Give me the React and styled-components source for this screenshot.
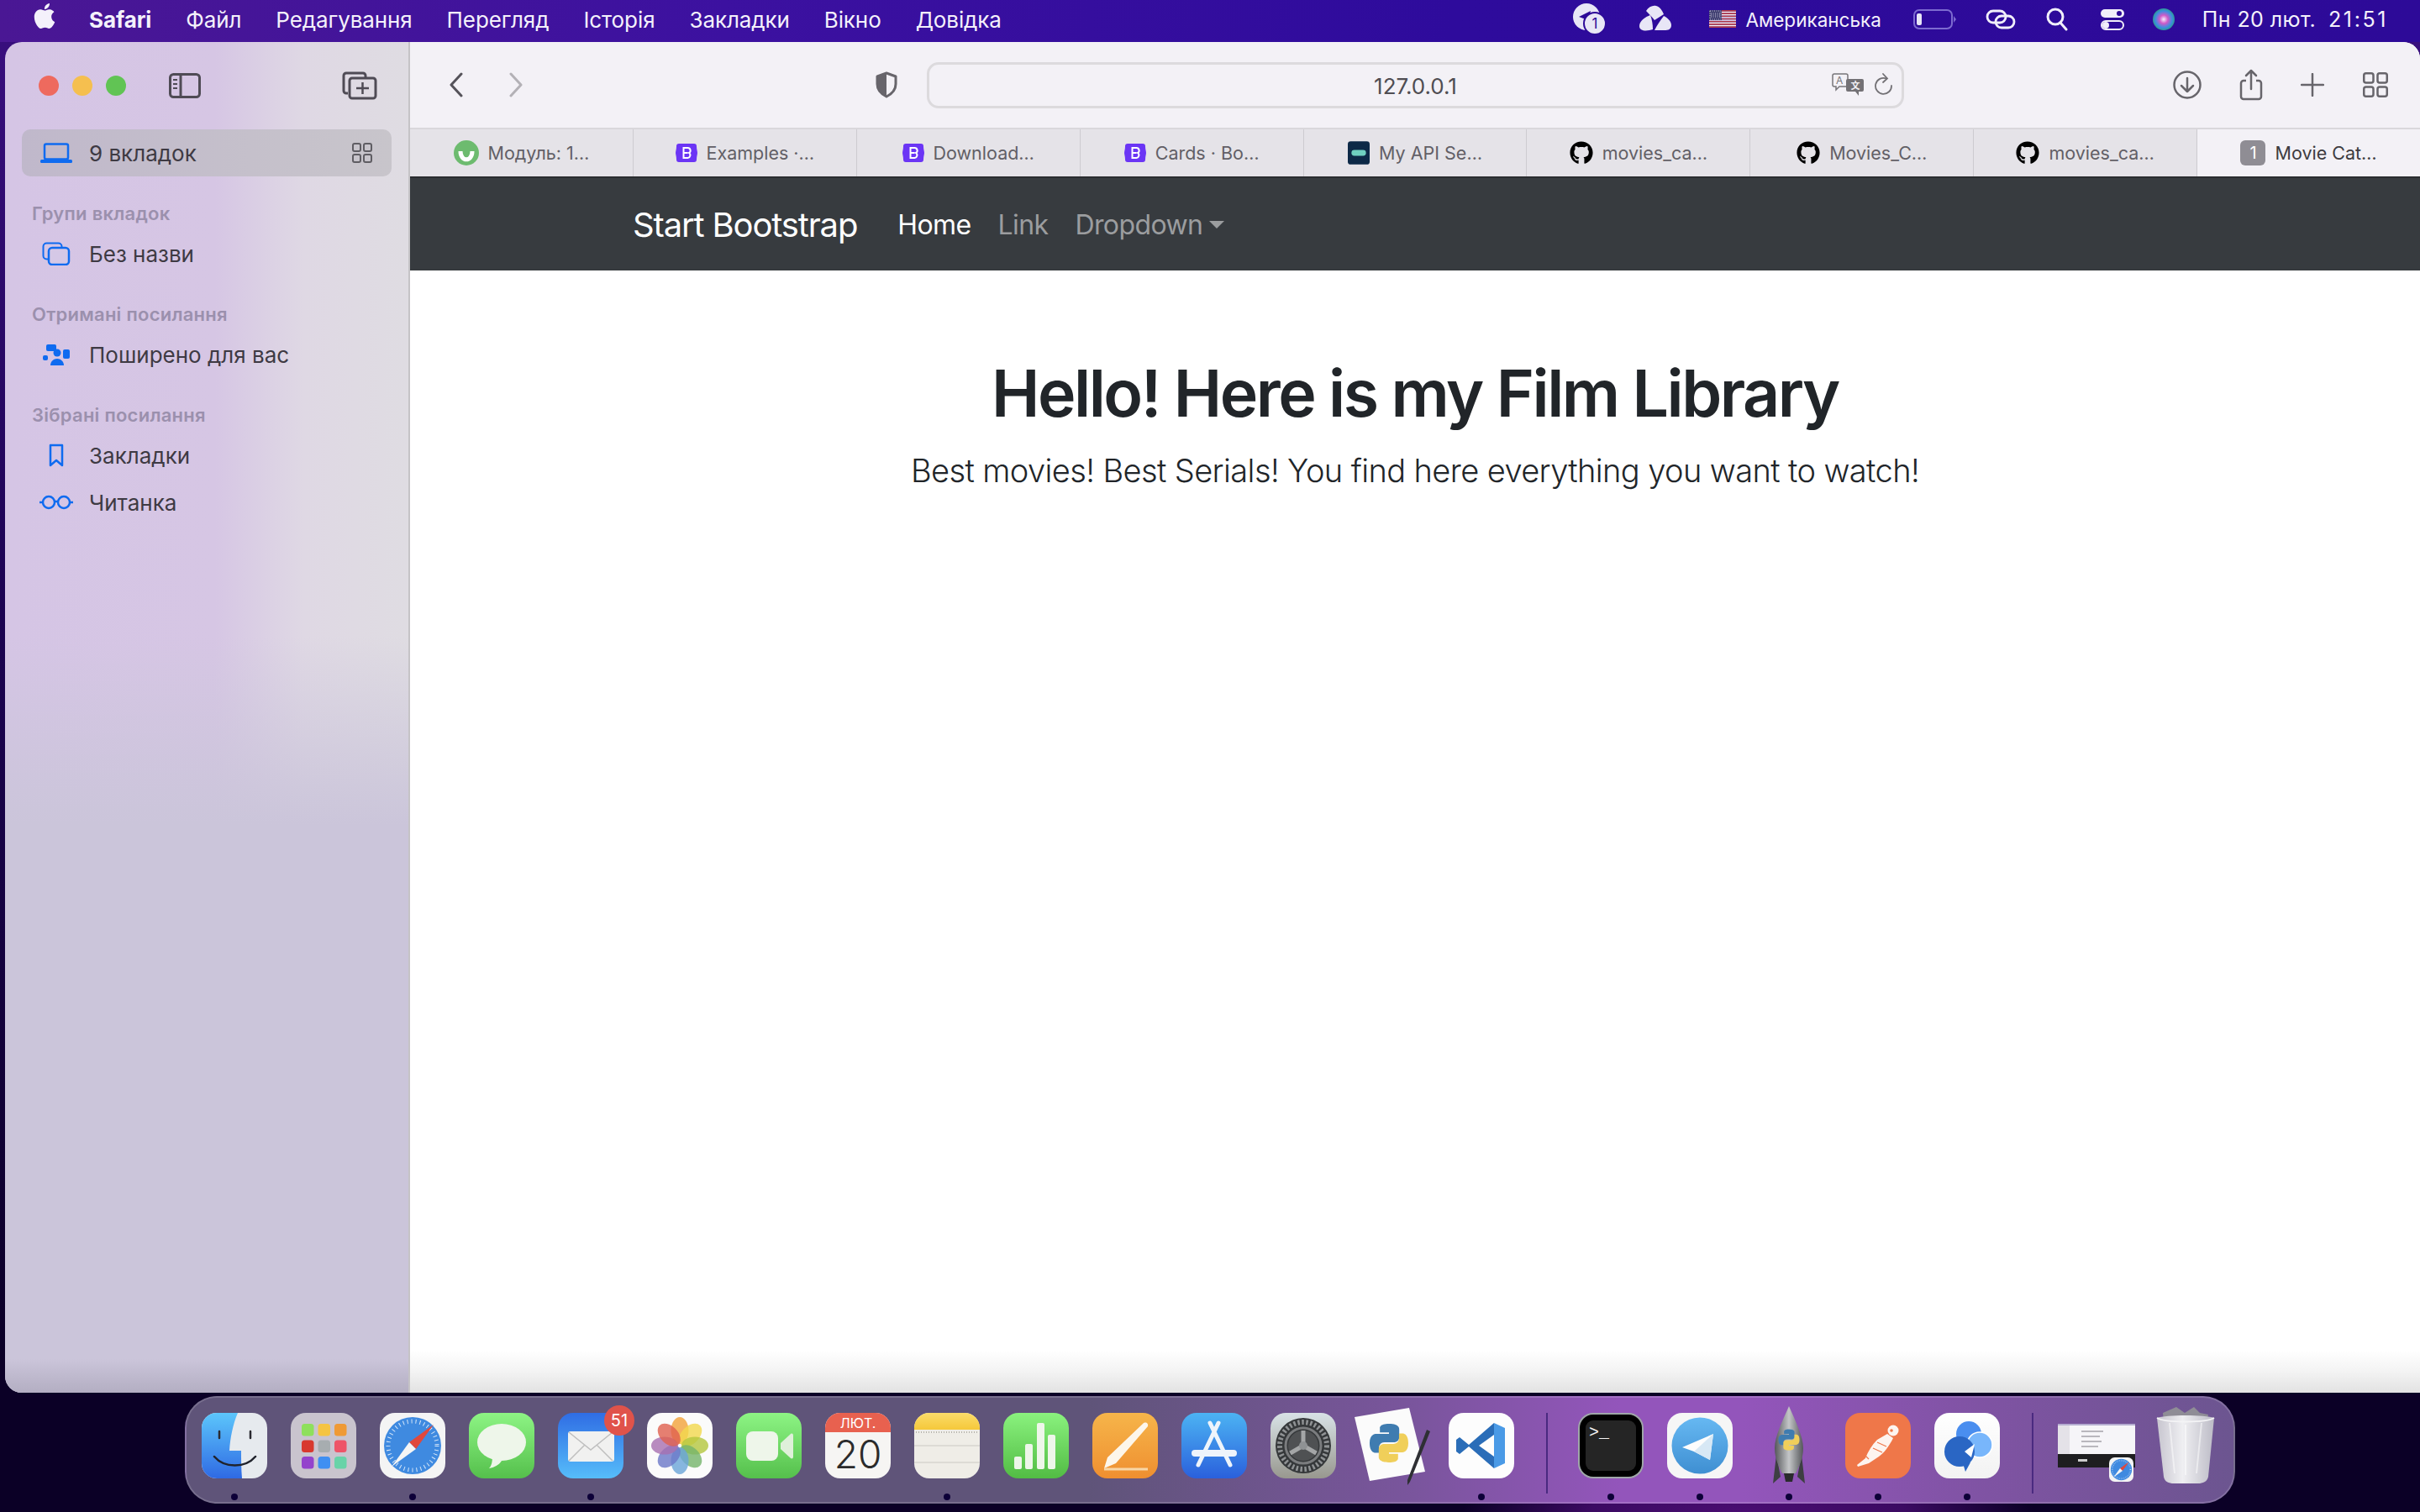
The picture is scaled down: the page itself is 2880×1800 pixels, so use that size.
import React from "react";
import styled, { createGlobalStyle } from "styled-components";
import { SiApple } from "react-icons/si";
import { FaGithub } from "react-icons/fa";

const GlobalStyle = createGlobalStyle`
  html, body { margin: 0; padding: 0; }
  body { font-family: Inter, "Noto Sans", sans-serif; }
  * { box-sizing: border-box; }
`;

const Page = styled.div`
  width: 2880px;
  height: 1800px;
  overflow: hidden;
  display: flex;
  flex-direction: column;
  background:
    radial-gradient(ellipse 340px 70px at 2080px 1800px, #4a0d72 0%, #3b0a62 55%, transparent 100%),
    linear-gradient(180deg, #3a0f80 0%, #1c0352 40%, #0b0026 90%);
`;

/* ---------- menu bar ---------- */
const MenuBar = styled.div`
  height: 50px;
  flex: none;
  display: flex;
  align-items: center;
  padding: 0 0 4px 38px;
  color: #f4f1fb;
  font-size: 26px;
  letter-spacing: -0.1px;
  background: linear-gradient(90deg, #4a1794 0%, #3c11a0 30%, #2e0b9c 60%, #2d0a98 100%);
`;
const AppleMark = styled.span`
  width: 30px;
  height: 34px;
  display: flex;
  margin-right: 38px;
  margin-top: -4px;
  font-size: 30px;
`;
const MenuItem = styled.span`
  margin-right: ${(p) => p.$gap || 41}px;
  font-weight: ${(p) => (p.$bold ? 700 : 400)};
  white-space: nowrap;
`;
const StatusArea = styled.div`
  margin-left: auto;
  display: flex;
  align-items: center;
  padding-right: 38px;
`;
const StatusSlot = styled.span`
  display: flex;
  align-items: center;
  margin-left: ${(p) => p.$left || 0}px;
  white-space: nowrap;
`;
const KeyboardName = styled(StatusSlot)`
  font-size: 22.5px;
  letter-spacing: 0;
`;
const DateText = styled(StatusSlot)`
  font-size: 25px;
  letter-spacing: 0.4px;
`;
const TimeText = styled(StatusSlot)`
  font-size: 25px;
  letter-spacing: 2.6px;
`;

/* ---------- safari window ---------- */
const Window = styled.div`
  height: 1608px;
  flex: none;
  margin-left: 6px;
  display: flex;
  overflow: hidden;
  border-radius: 20px 20px 0 20px;
`;
const Sidebar = styled.div`
  width: 482px;
  flex: none;
  border-right: 2px solid #c5c3c6;
  background:
    linear-gradient(180deg, transparent 97.500%, rgba(150, 146, 165, 0.45) 100%),
    linear-gradient(180deg, rgba(205, 197, 222, 0) 0%, rgba(205, 197, 222, 0) 44%, rgba(203, 197, 218, 1) 58%),
    linear-gradient(90deg, #d5c5e5 0%, #d6c6e4 52%, #dfd8e4 74%, #dfdce2 100%);
`;
const SidebarTop = styled.div`
  height: 104px;
  display: flex;
  align-items: center;
  padding-left: 40px;
`;
const Light = styled.span`
  width: 24px;
  height: 24px;
  border-radius: 50%;
  margin-right: 16px;
  background: ${(p) => p.$color};
`;
const TopIcon = styled.span`
  display: flex;
  margin-left: ${(p) => p.$left}px;
`;
const SideRow = styled.div`
  height: 56px;
  margin: 0 20px;
  padding: 0 23px 0 16px;
  display: flex;
  align-items: center;
  border-radius: 10px;
  font-size: 26px;
  color: #3e3a43;
  background: ${(p) => (p.$active ? "linear-gradient(90deg,#c0b8cb,#c8c5cb)" : "transparent")};
`;
const SideIcon = styled.span`
  width: 50px;
  margin-right: 14px;
  display: flex;
  justify-content: center;
  align-items: center;
`;
const RowEnd = styled.span`
  margin-left: auto;
  display: flex;
`;
const SideSection = styled.div`
  margin-top: 29px;
`;
const SideTitle = styled.div`
  height: 30px;
  line-height: 30px;
  margin-bottom: 5px;
  padding-left: 32px;
  font-size: 22px;
  font-weight: 600;
  letter-spacing: 0.25px;
  color: #9b90ad;
`;
const Main = styled.div`
  flex: 1;
  min-width: 0;
  display: flex;
  flex-direction: column;
  background: #fff;
`;
const Toolbar = styled.div`
  height: 104px;
  flex: none;
  padding-left: 35px;
  display: flex;
  align-items: center;
  background: #f3f1f6;
  border-bottom: 2px solid #d9d7db;
`;
const ToolBtn = styled.span`
  width: 40px;
  height: 40px;
  flex: none;
  display: flex;
  align-items: center;
  justify-content: center;
  margin-left: ${(p) => p.$left || 0}px;
`;
const UrlBar = styled.div`
  width: 1163px;
  height: 55px;
  flex: none;
  margin-left: 28px;
  display: grid;
  grid-template-columns: 1fr auto 1fr;
  align-items: center;
  border: 3px solid #dcdadd;
  border-radius: 14px;
  color: #4f4d52;
  font-size: 26px;
`;
const UrlText = styled.span`
  grid-column: 2;
  padding-top: 2px;
`;
const UrlTools = styled.div`
  grid-column: 3;
  display: flex;
  justify-content: flex-end;
  align-items: center;
  gap: 13px;
  padding-right: 10px;
`;
const TabStrip = styled.div`
  height: 56px;
  flex: none;
  display: flex;
  background: #e5e3e8;
`;
const Tab = styled.div`
  flex: 1;
  min-width: 0;
  display: flex;
  align-items: center;
  justify-content: center;
  gap: 11px;
  font-size: 21.500px;
  white-space: nowrap;
  color: ${(p) => (p.$active ? "#3d3b40" : "#625f66")};
  background: ${(p) => (p.$active ? "#f3f1f6" : "transparent")};
  border-right: ${(p) => (p.$active ? "none" : "1px solid #cdcbd0")};
`;
const NavBar = styled.nav`
  height: 112px;
  flex: none;
  padding-left: 265px;
  display: flex;
  align-items: center;
  background: #373b3f;
  border-top: 2px solid #2a2c2f;
`;
const Brand = styled.span`
  font-size: 40px;
  color: #fff;
  margin-right: 48px;
  letter-spacing: -1.15px;
`;
const NavLink = styled.span`
  font-size: 32px;
  letter-spacing: -0.6px;
  color: ${(p) => (p.$active ? "#fff" : "#9b9d9f")};
  margin-right: 32px;
  display: flex;
  align-items: center;
`;
const Caret = styled.span`
  width: 0;
  height: 0;
  margin-left: 8px;
  border-top: 9px solid currentColor;
  border-left: 9px solid transparent;
  border-right: 9px solid transparent;
`;
const Hero = styled.div`
  flex: 1;
  padding-top: 96px;
  text-align: center;
  color: #212529;
`;
const HeroTitle = styled.h1`
  margin: 0;
  font-size: 77px;
  font-weight: 600;
  line-height: 100px;
  letter-spacing: -2.5px;
`;
const HeroLead = styled.p`
  margin: 17px 0 0;
  font-size: 38px;
  font-weight: 300;
  line-height: 50px;
  letter-spacing: -0.6px;
`;
const BottomShade = styled.div`
  height: 50px;
  flex: none;
  background: linear-gradient(180deg, #fff 0%, #f3f3f3 50%, #e2e2e2 100%);
`;

/* ---------- dock ---------- */
const DockRow = styled.div`
  margin-top: 4px;
  display: flex;
  justify-content: center;
`;
const Dock = styled.div`
  width: 2440px;
  height: 128px;
  padding: 18px 0 0 4px;
  display: flex;
  border: 2px solid rgba(255, 255, 255, 0.16);
  border-radius: 38px;
  background: linear-gradient(90deg, #5f5479 0%, #5f5479 44%, #7a559d 60%, #9355bb 70%, #9355bb 76%, #7f53a3 88%, #6c5590 100%);
`;
const Slot = styled.div`
  width: 106px;
  flex: none;
  position: relative;
  display: flex;
  flex-direction: column;
  align-items: center;
`;
const Dot = styled.span`
  width: 8px;
  height: 8px;
  margin-top: 18px;
  border-radius: 50%;
  background: ${(p) => (p.$on ? "#0d0038" : "transparent")};
`;
const Badge = styled.span`
  position: absolute;
  top: -9px;
  left: 69px;
  width: 36px;
  height: 36px;
  border-radius: 50%;
  display: flex;
  align-items: center;
  justify-content: center;
  background: #e0534a;
  color: #fff;
  font-size: 20px;
`;
const DockDivider = styled.span`
  width: 2px;
  height: 96px;
  flex: none;
  margin: 0 22px 0 24px;
  background: #4a2a80;
`;
const TileSvg = styled.svg`
  display: block;
  overflow: visible;
`;

/* ---------- small icons ---------- */
const Blue = "#0f6bf0";
const Grey = "#5f5d63";

const Shape = ({ w, h, vb, children }) => (
  <svg width={w} height={h} viewBox={vb || `0 0 ${w} ${h}`} fill="none">
    {children}
  </svg>
);

const GridIcon = ({ c = Grey, s = 24 }) => (
  <Shape w={s} h={s} vb="0 0 24 24">
    {[[1, 1], [14, 1], [1, 14], [14, 14]].map(([x, y]) => (
      <rect key={`${x}-${y}`} x={x} y={y} width="9" height="9" rx="2" stroke={c} strokeWidth="2" />
    ))}
  </Shape>
);

const SidebarToggle = () => (
  <Shape w={38} h={30}>
    <rect x="1.500" y="1.500" width="35" height="27" rx="4" stroke="#4f4b55" strokeWidth="3" />
    <path d="M14 2v26" stroke="#4f4b55" strokeWidth="3" />
    <path d="M5 8h5M5 13h5M5 18h5" stroke="#4f4b55" strokeWidth="2" />
  </Shape>
);

const NewTabGroup = () => (
  <Shape w={42} h={34}>
    <path d="M7 26H5a3 3 0 0 1-3-3V5a3 3 0 0 1 3-3h20a3 3 0 0 1 3 3v2" stroke="#4f4b55" strokeWidth="3" />
    <rect x="9" y="8" width="31" height="24" rx="3" stroke="#4f4b55" strokeWidth="3" />
    <path d="M24.500 13v14M17 20h15" stroke="#4f4b55" strokeWidth="2.500" />
  </Shape>
);

const Laptop = () => (
  <Shape w={38} h={24}>
    <rect x="5" y="1.500" width="28" height="18" rx="2" stroke={Blue} strokeWidth="2.500" />
    <rect x="0" y="20" width="38" height="4" rx="1.500" fill={Blue} />
  </Shape>
);

const TabGroupIcon = () => (
  <Shape w={34} h={28}>
    <rect x="1.500" y="1.500" width="22" height="19" rx="4" stroke={Blue} strokeWidth="2" />
    <rect x="8" y="7" width="24" height="20" rx="4" fill="#d5c8e6" stroke={Blue} strokeWidth="2.500" />
  </Shape>
);

const SharedIcon = () => (
  <Shape w={32} h={25}>
    <rect x="4" y="0" width="12" height="8" rx="2" fill={Blue} />
    <rect x="24" y="6" width="8" height="11" rx="2" fill={Blue} />
    <rect x="0" y="13" width="6" height="6" rx="2" fill={Blue} />
    <circle cx="17" cy="10" r="4.500" fill={Blue} />
    <path d="M9 25c0-5 4-8 8-8s8 3 8 8z" fill={Blue} />
  </Shape>
);

const Bookmark = () => (
  <Shape w={18} h={28}>
    <path d="M2 2h14v24l-7-6-7 6z" stroke={Blue} strokeWidth="2.500" strokeLinejoin="round" />
  </Shape>
);

const Glasses = () => (
  <Shape w={40} h={18}>
    <circle cx="11" cy="9" r="7" stroke={Blue} strokeWidth="2.500" />
    <circle cx="29" cy="9" r="7" stroke={Blue} strokeWidth="2.500" />
    <path d="M18 8h4M0 9h4M36 9h4" stroke={Blue} strokeWidth="2.500" />
  </Shape>
);

const Chevron = ({ left, color }) => (
  <Shape w={18} h={30}>
    <path d={left ? "M15 2 3 15l12 13" : "M3 2l12 13L3 28"} stroke={color} strokeWidth="3" strokeLinecap="round" strokeLinejoin="round" />
  </Shape>
);

const ShieldIcon = () => (
  <Shape w={28} h={32}>
    <path d="M14 2 3 6v9c0 8 5 12 11 15 6-3 11-7 11-15V6z" stroke="#67656b" strokeWidth="3" strokeLinejoin="round" />
    <path d="M14 2 3 6v9c0 8 5 12 11 15z" fill="#67656b" />
  </Shape>
);

const TranslateIcon = () => (
  <Shape w={38} h={28}>
    <path d="M3 1h14a2 2 0 0 1 2 2v11a2 2 0 0 1-2 2H9l-4 4v-4H3a2 2 0 0 1-2-2V3a2 2 0 0 1 2-2z" stroke="#777579" strokeWidth="1.500" />
    <text x="5" y="13" fontSize="12" fontFamily="Inter" fill="#777579">A</text>
    <path d="M19 7h17a2 2 0 0 1 2 2v11a2 2 0 0 1-2 2h-4v5l-4-5h-9a2 2 0 0 1-2-2V9a2 2 0 0 1 2-2z" fill="#737175" />
    <text x="22.500" y="19" fontSize="11" fontFamily="'Noto Sans CJK SC'" fontWeight="700" fill="#f3f1f6">文</text>
  </Shape>
);

const ReloadIcon = () => (
  <Shape w={22} h={28}>
    <path d="M14 6.500A9.500 9.500 0 1 0 20 15" stroke="#737175" strokeWidth="1.800" strokeLinecap="round" />
    <path d="M10 1l5 5.500-5 4.500" stroke="#737175" strokeWidth="1.800" strokeLinecap="round" />
  </Shape>
);

const DownloadIcon = () => (
  <Shape w={34} h={34}>
    <circle cx="17" cy="17" r="15.500" stroke="#67656b" strokeWidth="2.500" />
    <path d="M17 9v16M10 18l7 7 7-7" stroke="#67656b" strokeWidth="2.500" strokeLinecap="round" strokeLinejoin="round" />
  </Shape>
);

const ShareIcon = () => (
  <Shape w={28} h={38}>
    <path d="M8 14H5a3 3 0 0 0-3 3v16a3 3 0 0 0 3 3h18a3 3 0 0 0 3-3V17a3 3 0 0 0-3-3h-3" stroke="#67656b" strokeWidth="2.500" />
    <path d="M14 24V2M8 8l6-6 6 6" stroke="#67656b" strokeWidth="2.500" strokeLinecap="round" strokeLinejoin="round" />
  </Shape>
);

const PlusIcon = () => (
  <Shape w={28} h={28}>
    <path d="M14 1v26M1 14h26" stroke="#67656b" strokeWidth="2.500" strokeLinecap="round" />
  </Shape>
);

/* favicons */
const FavMoodle = () => (
  <Shape w={30} h={30}>
    <circle cx="15" cy="15" r="15" fill="#6dbb6f" />
    <path d="M8 13c0 13 14 13 14 0" stroke="#fff" strokeWidth="5" />
  </Shape>
);
const FavBootstrap = () => (
  <Shape w={26} h={26}>
    <path d="M4 2a3 3 0 0 0-3 3c0 4-1 6-1 8s1 4 1 8a3 3 0 0 0 3 3h18a3 3 0 0 0 3-3c0-4 1-6 1-8s-1-4-1-8a3 3 0 0 0-3-3z" fill="#6b35f5" />
    <path d="M9.500 7h5a3.200 3.200 0 0 1 1.500 6 3.300 3.300 0 0 1-1.500 6h-5zM9.500 13h5" stroke="#fff" strokeWidth="2" fill="none" />
  </Shape>
);
const FavApi = () => (
  <Shape w={26} h={32} vb="0 0 30 32">
    <rect width="30" height="32" rx="4" fill="#0d2947" />
    <rect x="5" y="12" width="20" height="8" rx="4" fill="#6fd0c0" />
  </Shape>
);
const FavNumber = styled.span`
  width: 30px;
  height: 30px;
  border-radius: 6px;
  display: flex;
  align-items: center;
  justify-content: center;
  background: #8f8d94;
  color: #fff;
  font-size: 20px;
`;

/* menu bar extras */
const Extra1 = () => (
  <Shape w={42} h={38}>
    <circle cx="17" cy="16" r="16" fill="#e8e6f6" />
    <path d="M8 16l14-7-3 11z" fill="#2d0a98" />
    <circle cx="27" cy="24" r="13" fill="#e8e6f6" stroke="#2d0a98" strokeWidth="2" />
    <text x="27" y="30" textAnchor="middle" fontSize="17" fontFamily="Inter" fill="#2d0a98">1</text>
  </Shape>
);
const Extra2 = () => (
  <Shape w={38} h={34}>
    <path d="M8 7C11 2 16 0 20 1c4 1 7 5 9 10l-11 7C15 14 11 10 8 7z" fill="#e8e6f6" />
    <path d="M0 25c0-6 7-11 13-13 2 5 3 11 3 17-6 2-16 3-16-4z" fill="#e8e6f6" />
    <path d="M29 13c4 2 9 6 9 11s-4 6-8 6H18c3-6 7-12 11-17z" fill="#e8e6f6" />
  </Shape>
);
const Flag = () => (
  <Shape w={32} h={22}>
    {[0, 1, 2, 3, 4, 5, 6].map((i) => (
      <rect key={i} x="0" y={i * 3.2} width="32" height="1.800" fill="#b23a48" />
    ))}
    {[0, 1, 2, 3, 4, 5].map((i) => (
      <rect key={i} x="0" y={1.8 + i * 3.2} width="32" height="1.400" fill="#f4f1f4" />
    ))}
    <rect width="15" height="12" fill="#3c3b6e" />
    <rect x="1" y="1" width="13" height="10" fill="none" stroke="#cfcde0" strokeWidth="1" strokeDasharray="1 1.500" />
    <path d="M2 4h11M2 6h11M2 8h11" stroke="#cfcde0" strokeDasharray="1 1.500" />
  </Shape>
);
const Battery = () => (
  <Shape w={51} h={24}>
    <rect x="1" y="1" width="45" height="22" rx="6" stroke="#7d6bd0" strokeWidth="2" />
    <rect x="4" y="5" width="6" height="14" rx="2" fill="#e8e6f6" />
    <path d="M48 8l3 4-3 4z" fill="#7d6bd0" />
  </Shape>
);
const LinkExtra = () => (
  <Shape w={36} h={24}>
    <rect x="2" y="2" width="22" height="14" rx="7" stroke="#f1effa" strokeWidth="2.800" />
    <rect x="12" y="8" width="22" height="14" rx="7" stroke="#f1effa" strokeWidth="2.800" />
  </Shape>
);
const SearchExtra = () => (
  <Shape w={26} h={28}>
    <circle cx="11" cy="11" r="9" stroke="#f1effa" strokeWidth="3" />
    <path d="M17 18l7 8" stroke="#f1effa" strokeWidth="3" strokeLinecap="round" />
  </Shape>
);
const ControlExtra = () => (
  <Shape w={30} h={26}>
    <rect x="1" y="1" width="28" height="10" rx="5" fill="#f1effa" />
    <circle cx="23" cy="6" r="3" fill="#2d0a98" />
    <rect x="2" y="15" width="26" height="10" rx="5" stroke="#f1effa" strokeWidth="2" />
    <circle cx="7" cy="20" r="4" fill="#f1effa" />
  </Shape>
);
const SiriExtra = () => (
  <Shape w={28} h={28}>
    <defs>
      <radialGradient id="siri" cx="50%" cy="50%" r="55%">
        <stop offset="0%" stopColor="#f4f0ff" />
        <stop offset="35%" stopColor="#d05ac8" />
        <stop offset="70%" stopColor="#3a8fe0" />
        <stop offset="100%" stopColor="#2aa070" />
      </radialGradient>
    </defs>
    <circle cx="14" cy="14" r="13" fill="url(#siri)" />
  </Shape>
);

/* ---------- dock tiles ---------- */
const R = 18;
const Tile = ({ children, defs }) => (
  <TileSvg width="78" height="78" viewBox="0 0 78 78" fill="none">
    {defs && <defs>{defs}</defs>}
    {children}
  </TileSvg>
);
const VGrad = ({ id, a, b }) => (
  <linearGradient id={id} x1="0" y1="0" x2="0" y2="1">
    <stop offset="0%" stopColor={a} />
    <stop offset="100%" stopColor={b} />
  </linearGradient>
);
const PythonMark = ({ x, y, s }) => (
  <g transform={`translate(${x} ${y}) scale(${s})`}>
    <path d="M12 2c-5 0-4.700 2.200-4.700 2.200V6.500H12v.7H5.500S2 6.800 2 12s3 5 3 5h1.800v-2.400s-.1-3 3-3h4.600s2.900.05 2.900-2.800V4.900S17.800 2 12 2z" fill="#3f7cb0" />
    <path d="M12 2c-5 0-4.700 2.200-4.700 2.200V6.500H12v.7H5.500S2 6.800 2 12s3 5 3 5h1.800v-2.400s-.1-3 3-3h4.600s2.900.05 2.900-2.800V4.900S17.800 2 12 2z" fill="#f0cf5a" transform="rotate(180 12 12)" />
  </g>
);

const Finder = () => (
  <Tile defs={<VGrad id="fb" a="#5cc6fb" b="#2f6ae4" />}>
    <rect width="78" height="78" rx={R} fill="#e6eaee" />
    <path d="M18 0h25c-6 14-9 30-10 45h14c0 10 0 22 1 33H18A18 18 0 0 1 0 60V18A18 18 0 0 1 18 0z" fill="url(#fb)" />
    <path d="M21 22v8M58 22v8" stroke="#2a2a30" strokeWidth="2.500" strokeLinecap="round" />
    <path d="M15 52c12 14 37 14 49 0" stroke="#20232c" strokeWidth="2.500" strokeLinecap="round" />
  </Tile>
);
const Launchpad = () => {
  const colors = ["#8ee05c", "#f5c442", "#ef9a36", "#d8382e", "#a7adb0", "#ee5468", "#9443cc", "#3f8ff2", "#68d3a8"];
  return (
    <Tile>
      <rect width="78" height="78" rx={R} fill="#c9c4ce" />
      {colors.map((c, i) => (
        <rect key={c} x={13 + (i % 3) * 19.5} y={13 + Math.floor(i / 3) * 19.5} width="14.500" height="14.500" rx="3.500" fill={c} />
      ))}
    </Tile>
  );
};
const Safari = ({ s = 78 }) => (
  <TileSvg width={s} height={s} viewBox="0 0 78 78" fill="none">
    <rect width="78" height="78" rx={R} fill="#f4f4f4" />
    <circle cx="39" cy="39" r="34" fill="#3f8ae0" />
    <circle cx="39" cy="39" r="29" stroke="#d5e6f8" strokeWidth="5" strokeDasharray="1 4" />
    <path d="M64 14 35 35l8 8z" fill="#e0483c" />
    <path d="M14 64l29-21-8-8z" fill="#f5f5f5" />
  </TileSvg>
);
const Messages = () => (
  <Tile defs={<VGrad id="mg" a="#8df484" b="#55c04c" />}>
    <rect width="78" height="78" rx={R} fill="url(#mg)" />
    <ellipse cx="39" cy="35" rx="29" ry="22" fill="#eef6ea" />
    <path d="M28 52c0 6-1 11-4 14 6-1 12-4 15-9z" fill="#eef6ea" />
  </Tile>
);
const Mail = () => (
  <Tile defs={<VGrad id="ml" a="#2f6de4" b="#56bdfa" />}>
    <rect width="78" height="78" rx={R} fill="url(#ml)" />
    <rect x="12" y="22" width="55" height="36" rx="3" fill="#f1f1f0" />
    <path d="M13 23l26 21 26-21M13 57l19-19M65 57 46 38" stroke="#bfbfbf" strokeWidth="1.500" />
  </Tile>
);
const Photos = () => {
  const petals = ["#f2a33a", "#f2d84e", "#b4c73f", "#74b46a", "#6aa5d8", "#6b78c8", "#a86fb0", "#e0604f"];
  return (
    <Tile>
      <rect width="78" height="78" rx={R} fill="#fbfbfb" />
      {petals.map((c, i) => (
        <ellipse key={c} cx="39" cy="21" rx="10.500" ry="16" fill={c} opacity="0.8" transform={`rotate(${i * 45} 39 39)`} />
      ))}
    </Tile>
  );
};
const FaceTime = () => (
  <Tile defs={<VGrad id="ft" a="#8df484" b="#55c04c" />}>
    <rect width="78" height="78" rx={R} fill="url(#ft)" />
    <rect x="12" y="22" width="38" height="35" rx="8" fill="#eef6ea" />
    <path d="M53 36l12-11c2-1 3 0 3 2v25c0 2-1 3-3 2L53 43z" fill="#dff0da" />
  </Tile>
);
const Calendar = () => (
  <Tile>
    <rect width="78" height="78" rx={R} fill="#f6f5f3" />
    <path d="M18 0h42a18 18 0 0 1 18 18v5H0v-5A18 18 0 0 1 18 0z" fill="#e8614f" />
    <text x="39" y="18" textAnchor="middle" fontFamily="Inter" fontSize="16" fill="#fff">ЛЮТ.</text>
    <text x="39" y="66" textAnchor="middle" fontFamily="Inter" fontWeight="300" fontSize="46" fill="#2b2b2b">20</text>
  </Tile>
);
const Notes = () => (
  <Tile defs={<VGrad id="nt" a="#fbdc6a" b="#f5c83a" />}>
    <rect width="78" height="78" rx={R} fill="#efede7" />
    <path d="M18 0h42a18 18 0 0 1 18 18v2H0v-2A18 18 0 0 1 18 0z" fill="url(#nt)" />
    <path d="M2 23h74" stroke="#b5b3ac" strokeWidth="2" strokeDasharray="1 2" />
    <path d="M0 39h78M0 59h78" stroke="#dddbd5" strokeWidth="2" />
  </Tile>
);
const Numbers = () => (
  <Tile defs={<VGrad id="nb" a="#8af27e" b="#52bc44" />}>
    <rect width="78" height="78" rx={R} fill="url(#nb)" />
    {[[13, 52], [26, 37], [40, 12], [53, 26]].map(([x, y]) => (
      <rect key={x} x={x} y={y} width="9" height={67 - y} rx="2" fill="#eef6ea" />
    ))}
  </Tile>
);
const Pages = () => (
  <Tile defs={<VGrad id="pg" a="#f6b54a" b="#ef8f30" />}>
    <rect width="78" height="78" rx={R} fill="url(#pg)" />
    <path d="M60 13c3-3 7-1 6 3L28 60l-14 6 4-13z" fill="#fdf6ea" />
    <path d="M14 67h52" stroke="#f8d6a6" strokeWidth="3" />
  </Tile>
);
const AppStore = () => (
  <Tile defs={<VGrad id="as" a="#4cb3f3" b="#2a60dc" />}>
    <rect width="78" height="78" rx={R} fill="url(#as)" />
    <path d="M34 12l24 50M44 12 20 62" stroke="#eef4fb" strokeWidth="5" strokeLinecap="round" />
    <path d="M16 48h46" stroke="#eef4fb" strokeWidth="8" strokeLinecap="round" />
  </Tile>
);
const Settings = () => (
  <Tile defs={<VGrad id="st" a="#d8e2e6" b="#98988f" />}>
    <rect width="78" height="78" rx={R} fill="url(#st)" />
    <circle cx="39" cy="39" r="33" fill="#35383a" />
    <circle cx="39" cy="39" r="28" stroke="#8f9294" strokeWidth="6" strokeDasharray="2.500 2.500" />
    <circle cx="39" cy="39" r="21" stroke="#7a7c7e" strokeWidth="3" />
    <circle cx="39" cy="39" r="18" fill="#4f5153" />
    <path d="M39 39V21M39 39 23.500 48M39 39l15.500 9" stroke="#a4a6a7" strokeWidth="5" />
    <circle cx="39" cy="39" r="5" fill="#8f9294" />
  </Tile>
);
const PythonLauncher = () => (
  <Tile>
    <path d="M-6 5 59-6l19 76-66 11z" fill="#fbfbfb" />
    <PythonMark x={7.4} y={8.4} s={2.300} />
    <path d="M80 20l4 2-24 60-3 4 0-6z" fill="#2e2f33" />
  </Tile>
);
const VsCode = () => (
  <Tile>
    <rect width="78" height="78" rx={R} fill="#fdfdfd" />
    <path d="M54 12 24 38 13 29l-4 3v14l4 3 11-9 30 26z" fill="#2a6db8" />
    <path d="M54 12l13 6v42l-13 6z" fill="#4a9ae6" />
    <path d="M54 26v26L36 39z" fill="#fdfdfd" />
  </Tile>
);
const Terminal = () => (
  <Tile>
    <rect x="0" y="0" width="78" height="78" rx={R} fill="#9fa6a8" />
    <rect x="2" y="2" width="74" height="74" rx="16" fill="#000" />
    <rect x="9" y="9" width="60" height="60" rx="9" fill="#252525" />
    <text x="13" y="29" fontFamily="Liberation Mono" fontSize="20" fill="#f4f4f4">&gt;</text>
    <text x="25" y="29" fontFamily="Liberation Mono" fontSize="20" fontWeight="700" fill="#f4f4f4">_</text>
  </Tile>
);
const Telegram = () => (
  <Tile defs={<VGrad id="tg" a="#66b8f2" b="#3f8fd2" />}>
    <rect width="78" height="78" rx={R} fill="#f6f6f6" />
    <circle cx="39" cy="39" r="33.500" fill="url(#tg)" />
    <path d="M55 25 18 41l14 5 19 10z" fill="#fdfdfd" />
    <path d="M55 25 32 46l19 10z" fill="#d7e8f5" />
  </Tile>
);
const Rocket = () => (
  <Tile
    defs={
      <linearGradient id="rk" x1="0" y1="0" x2="1" y2="0">
        <stop offset="0%" stopColor="#55575a" />
        <stop offset="50%" stopColor="#c4c6c8" />
        <stop offset="100%" stopColor="#55575a" />
      </linearGradient>
    }
  >
    <path d="M24 50 20 84l9-8zM54 50l4 34-9-8z" fill="#3d3f42" />
    <path d="M39-8C32 8 22 28 22 42c0 12 5 22 9 30h16c4-8 9-18 9-30 0-14-10-34-17-50z" fill="url(#rk)" />
    <path d="M33 72h12l-2 10h-8z" fill="#2a2b2d" />
    <PythonMark x={24} y={17} s={1.250} />
  </Tile>
);
const Postman = () => (
  <Tile>
    <rect width="78" height="78" rx={R} fill="#ef7749" />
    <circle cx="57" cy="21" r="6.500" fill="#fdf4ef" />
    <circle cx="55" cy="21" r="1.800" fill="#ef7749" />
    <path d="M50 25l7 5c-5 10-11 18-17 22l-12 8-13 4-1-2 10-8c3-8 8-16 14-22z" fill="#fdf4ef" />
    <path d="M33 42l11 5M38 35l11 5M28 55l-5-5" stroke="#ef7749" strokeWidth="1.200" />
  </Tile>
);
const CloudApp = () => (
  <Tile defs={<VGrad id="ca" a="#ffffff" b="#f2f2f2" />}>
    <rect width="78" height="78" rx={R} fill="url(#ca)" />
    <circle cx="41" cy="25" r="15" fill="#4a8eef" />
    <circle cx="54" cy="38" r="15" fill="#78b6fb" stroke="#fff" strokeWidth="1.500" />
    <circle cx="30" cy="46" r="18" fill="#2a66c4" />
    <path d="M34 60l9-1-6 11z" fill="#2a66c4" />
    <path d="M36 46l12-9-4 16z" fill="#fff" />
  </Tile>
);
const Preview = () => (
  <TileSvg width="92" height="78" viewBox="0 0 92 78" fill="none">
    <rect y="13" width="92" height="36" fill="#f6f5f8" />
    <rect y="13" width="92" height="2" fill="#b5add0" />
    <rect y="15" width="14" height="34" fill="#e4e2e8" />
    <path d="M28 22h26M28 28h22M28 34h24M28 40h20" stroke="#b9b7bd" strokeWidth="2" />
    <rect y="49" width="92" height="16" fill="#1e1e20" />
    <rect x="24" y="55" width="11" height="3" fill="#ccc" />
    <g transform="translate(61 53)"><Safari s={29} /></g>
  </TileSvg>
);
const Trash = () => (
  <TileSvg width="70" height="78" viewBox="0 0 70 78" fill="none">
    <defs>
      <linearGradient id="tr" x1="0" y1="0" x2="1" y2="0">
        <stop offset="0%" stopColor="#c7c5cf" />
        <stop offset="45%" stopColor="#efeff2" />
        <stop offset="100%" stopColor="#bcbbc6" />
      </linearGradient>
    </defs>
    <path d="M8 0 24-7 34 0 45-7 52 0 62 2 60 12H9z" fill="#8f8d96" />
    <path d="M1 6c10-4 58-4 68 0l-7 70c-1 6-7 8-12 8H21c-6 0-11-2-12-8z" fill="url(#tr)" />
    <path d="M1 6c10 6 58 6 68 0" stroke="#f4f4f6" strokeWidth="2" />
    <path d="M16 12l6 60M35 14v60M54 12l-6 60" stroke="#fff" strokeWidth="2" opacity="0.5" />
  </TileSvg>
);

const firstDock = [
  { key: "finder", Icon: Finder, on: true },
  { key: "launchpad", Icon: Launchpad },
  { key: "safari", Icon: Safari, on: true },
  { key: "messages", Icon: Messages },
  { key: "mail", Icon: Mail, on: true, badge: "51" },
  { key: "photos", Icon: Photos },
  { key: "facetime", Icon: FaceTime },
  { key: "calendar", Icon: Calendar },
  { key: "notes", Icon: Notes, on: true },
  { key: "numbers", Icon: Numbers },
  { key: "pages", Icon: Pages },
  { key: "appstore", Icon: AppStore },
  { key: "settings", Icon: Settings },
  { key: "python", Icon: PythonLauncher },
  { key: "vscode", Icon: VsCode, on: true },
];
const secondDock = [
  { key: "terminal", Icon: Terminal, on: true },
  { key: "telegram", Icon: Telegram, on: true },
  { key: "rocket", Icon: Rocket, on: true },
  { key: "postman", Icon: Postman, on: true },
  { key: "cloud", Icon: CloudApp, on: true },
];
const thirdDock = [
  { key: "preview", Icon: Preview },
  { key: "trash", Icon: Trash },
];

const tabs = [
  { title: "Модуль: 1…", icon: <FavMoodle /> },
  { title: "Examples ·…", icon: <FavBootstrap /> },
  { title: "Download…", icon: <FavBootstrap /> },
  { title: "Cards · Bo…", icon: <FavBootstrap /> },
  { title: "My API Se…", icon: <FavApi /> },
  { title: "movies_ca…", icon: <FaGithub size={28} color="#000" /> },
  { title: "Movies_C…", icon: <FaGithub size={28} color="#000" /> },
  { title: "movies_ca…", icon: <FaGithub size={28} color="#000" /> },
  { title: "Movie Cat…", icon: <FavNumber>1</FavNumber>, active: true },
];

const menu = ["Файл", "Редагування", "Перегляд", "Історія", "Закладки", "Вікно", "Довідка"];

const DockGroup = ({ items }) =>
  items.map(({ key, Icon, on, badge }) => (
    <Slot key={key}>
      <Icon />
      {badge && <Badge>{badge}</Badge>}
      <Dot $on={on} />
    </Slot>
  ));

const App = () => {
  return (
    <Page>
      <GlobalStyle />
      <MenuBar>
        <AppleMark>
          <SiApple />
        </AppleMark>
        <MenuItem $bold>Safari</MenuItem>
        {menu.map((m) => (
          <MenuItem key={m}>{m}</MenuItem>
        ))}
        <StatusArea>
          <StatusSlot><Extra1 /></StatusSlot>
          <StatusSlot $left={38}><Extra2 /></StatusSlot>
          <StatusSlot $left={45}><Flag /></StatusSlot>
          <KeyboardName $left={11}>Американська</KeyboardName>
          <StatusSlot $left={38}><Battery /></StatusSlot>
          <StatusSlot $left={35}><LinkExtra /></StatusSlot>
          <StatusSlot $left={36}><SearchExtra /></StatusSlot>
          <StatusSlot $left={38}><ControlExtra /></StatusSlot>
          <StatusSlot $left={32}><SiriExtra /></StatusSlot>
          <DateText $left={32}>Пн 20 лют.</DateText>
          <TimeText $left={15}>21:51</TimeText>
        </StatusArea>
      </MenuBar>

      <Window>
        <Sidebar>
          <SidebarTop>
            <Light $color="#ee6a5e" />
            <Light $color="#f5bf4f" />
            <Light $color="#61c454" />
            <TopIcon $left={35}><SidebarToggle /></TopIcon>
            <TopIcon $left={168}><NewTabGroup /></TopIcon>
          </SidebarTop>
          <SideRow $active>
            <SideIcon><Laptop /></SideIcon>
            9 вкладок
            <RowEnd><GridIcon /></RowEnd>
          </SideRow>
          <SideSection>
            <SideTitle>Групи вкладок</SideTitle>
            <SideRow>
              <SideIcon><TabGroupIcon /></SideIcon>
              Без назви
            </SideRow>
          </SideSection>
          <SideSection>
            <SideTitle>Отримані посилання</SideTitle>
            <SideRow>
              <SideIcon><SharedIcon /></SideIcon>
              Поширено для вас
            </SideRow>
          </SideSection>
          <SideSection>
            <SideTitle>Зібрані посилання</SideTitle>
            <SideRow>
              <SideIcon><Bookmark /></SideIcon>
              Закладки
            </SideRow>
            <SideRow>
              <SideIcon><Glasses /></SideIcon>
              Читанка
            </SideRow>
          </SideSection>
        </Sidebar>

        <Main>
          <Toolbar>
            <ToolBtn><Chevron left color="#55535a" /></ToolBtn>
            <ToolBtn $left={31}><Chevron color="#b3b1b6" /></ToolBtn>
            <ToolBtn $left={401}><ShieldIcon /></ToolBtn>
            <UrlBar>
              <UrlText>127.0.0.1</UrlText>
              <UrlTools>
                <TranslateIcon />
                <ReloadIcon />
              </UrlTools>
            </UrlBar>
            <ToolBtn $left={317}><DownloadIcon /></ToolBtn>
            <ToolBtn $left={36}><ShareIcon /></ToolBtn>
            <ToolBtn $left={33}><PlusIcon /></ToolBtn>
            <ToolBtn $left={35}><GridIcon c="#67656b" s={30} /></ToolBtn>
          </Toolbar>
          <TabStrip>
            {tabs.map((t, i) => (
              <Tab key={i} $active={t.active}>
                {t.icon}
                {t.title}
              </Tab>
            ))}
          </TabStrip>
          <NavBar>
            <Brand>Start Bootstrap</Brand>
            <NavLink $active>Home</NavLink>
            <NavLink>Link</NavLink>
            <NavLink>
              Dropdown
              <Caret />
            </NavLink>
          </NavBar>
          <Hero>
            <HeroTitle>Hello! Here is my Film Library</HeroTitle>
            <HeroLead>Best movies! Best Serials! You find here everything you want to watch!</HeroLead>
          </Hero>
          <BottomShade />
        </Main>
      </Window>

      <DockRow>
        <Dock>
          <DockGroup items={firstDock} />
          <DockDivider />
          <DockGroup items={secondDock} />
          <DockDivider />
          <DockGroup items={thirdDock} />
        </Dock>
      </DockRow>
    </Page>
  );
};

export default App;
